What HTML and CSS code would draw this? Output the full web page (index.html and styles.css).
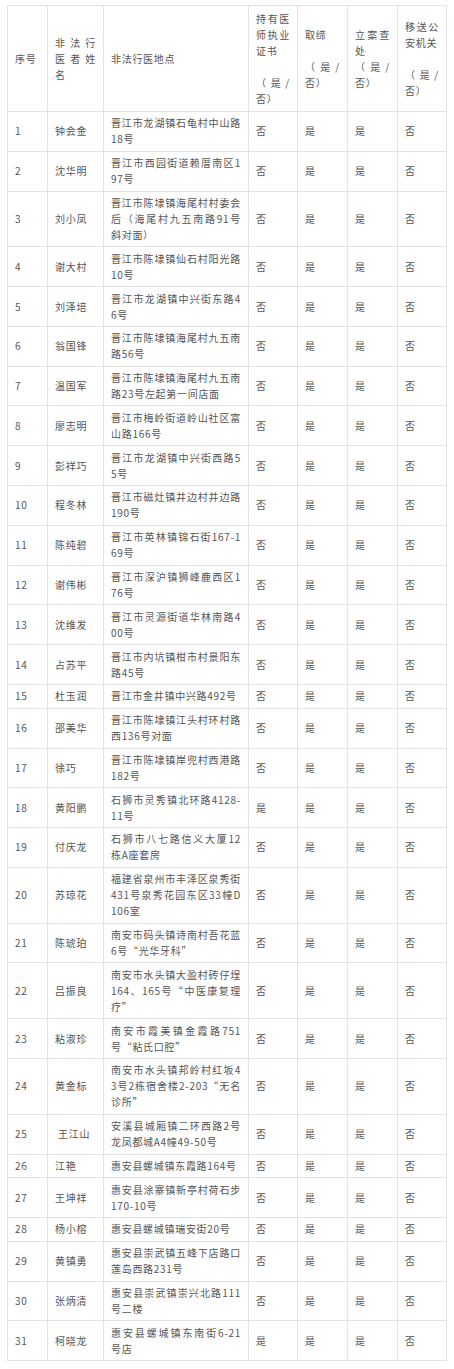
FILE: index.html
```html
<!DOCTYPE html>
<html lang="zh-CN">
<head>
<meta charset="utf-8">
<title>非法行医名单</title>
<link rel="stylesheet" href="styles.css">
</head>
<body>
<table class="list">
<colgroup>
<col class="c-no"><col class="c-name"><col class="c-addr"><col class="c-y"><col class="c-y2"><col class="c-y2"><col class="c-y">
</colgroup>
<thead>
<tr>
<th>序号</th>
<th><span class="j">非法行</span><span class="j">医者姓</span>名</th>
<th>非法行医地点</th>
<th><span class="j">持有医</span><span class="j">师执业</span>证书<span class="gap"></span><span class="j">（是/</span>否）</th>
<th>取缔<span class="gap"></span><span class="j">（是/</span>否）</th>
<th><span class="j">立案查</span>处<span class="j">（是/</span>否）</th>
<th><span class="j">移送公</span>安机关<span class="gap"></span><span class="j">（是/</span>否）</th>
</tr>
</thead>
<tbody>
<tr><td>1</td><td>钟会金</td><td><span class="j">晋江市龙湖镇石龟村中山路</span>18号</td><td>否</td><td>是</td><td>是</td><td>否</td></tr>
<tr><td>2</td><td>沈华明</td><td><span class="j">晋江市西园街道赖厝南区1</span>97号</td><td>否</td><td>是</td><td>是</td><td>否</td></tr>
<tr><td>3</td><td>刘小凤</td><td><span class="j">晋江市陈埭镇海尾村村委会</span><span class="j">后（海尾村九五南路91号</span>斜对面）</td><td>否</td><td>是</td><td>是</td><td>否</td></tr>
<tr><td>4</td><td>谢大村</td><td><span class="j">晋江市陈埭镇仙石村阳光路</span>10号</td><td>否</td><td>是</td><td>是</td><td>否</td></tr>
<tr><td>5</td><td>刘泽培</td><td><span class="j">晋江市龙湖镇中兴街东路4</span>6号</td><td>否</td><td>是</td><td>是</td><td>否</td></tr>
<tr><td>6</td><td>翁国锋</td><td><span class="j">晋江市陈埭镇海尾村九五南</span>路56号</td><td>否</td><td>是</td><td>是</td><td>否</td></tr>
<tr><td>7</td><td>温国军</td><td><span class="j">晋江市陈埭镇海尾村九五南</span>路23号左起第一间店面</td><td>否</td><td>是</td><td>是</td><td>否</td></tr>
<tr><td>8</td><td>廖志明</td><td><span class="j">晋江市梅岭街道岭山社区富</span>山路166号</td><td>否</td><td>是</td><td>是</td><td>否</td></tr>
<tr><td>9</td><td>彭祥巧</td><td><span class="j">晋江市龙湖镇中兴街西路5</span>5号</td><td>否</td><td>是</td><td>是</td><td>否</td></tr>
<tr><td>10</td><td>程冬林</td><td><span class="j">晋江市磁灶镇井边村井边路</span>190号</td><td>否</td><td>是</td><td>是</td><td>否</td></tr>
<tr><td>11</td><td>陈纯碧</td><td><span class="j">晋江市英林镇锦石街167-1</span>69号</td><td>否</td><td>是</td><td>是</td><td>否</td></tr>
<tr><td>12</td><td>谢伟彬</td><td><span class="j">晋江市深沪镇狮峰鹿西区1</span>76号</td><td>否</td><td>是</td><td>是</td><td>否</td></tr>
<tr><td>13</td><td>沈维发</td><td><span class="j">晋江市灵源街道华林南路4</span>00号</td><td>否</td><td>是</td><td>是</td><td>否</td></tr>
<tr><td>14</td><td>占苏平</td><td><span class="j">晋江市内坑镇柑市村景阳东</span>路45号</td><td>否</td><td>是</td><td>是</td><td>否</td></tr>
<tr><td>15</td><td>杜玉润</td><td>晋江市金井镇中兴路492号</td><td>否</td><td>是</td><td>是</td><td>否</td></tr>
<tr><td>16</td><td>邵美华</td><td><span class="j">晋江市陈埭镇江头村环村路</span>西136号对面</td><td>否</td><td>是</td><td>是</td><td>否</td></tr>
<tr><td>17</td><td>徐巧</td><td><span class="j">晋江市陈埭镇岸兜村西港路</span>182号</td><td>否</td><td>是</td><td>是</td><td>否</td></tr>
<tr><td>18</td><td>黄阳鹏</td><td><span class="j">石狮市灵秀镇北环路4128-</span>11号</td><td>是</td><td>是</td><td>是</td><td>否</td></tr>
<tr><td>19</td><td>付庆龙</td><td><span class="j">石狮市八七路信义大厦12</span>栋A座套房</td><td>否</td><td>是</td><td>是</td><td>否</td></tr>
<tr><td>20</td><td>苏琼花</td><td><span class="j">福建省泉州市丰泽区泉秀街</span><span class="j">431号泉秀花园东区33幢D</span>106室</td><td>否</td><td>是</td><td>是</td><td>否</td></tr>
<tr><td>21</td><td>陈琥珀</td><td><span class="j">南安市码头镇诗南村吾花蓝</span>6号“光华牙科”</td><td>否</td><td>是</td><td>是</td><td>否</td></tr>
<tr><td>22</td><td>吕振良</td><td><span class="j">南安市水头镇大盈村砖仔埕</span><span class="j">164、165号“中医康复理</span>疗”</td><td>否</td><td>是</td><td>是</td><td>否</td></tr>
<tr><td>23</td><td>粘淑珍</td><td><span class="j">南安市霞美镇金霞路751</span>号“粘氏口腔”</td><td>否</td><td>是</td><td>是</td><td>否</td></tr>
<tr><td>24</td><td>黄金标</td><td><span class="j">南安市水头镇邦岭村红坂4</span><span class="j">3号2栋宿舍楼2-203“无名</span>诊所”</td><td>否</td><td>是</td><td>是</td><td>否</td></tr>
<tr><td>25</td><td><span class="ind">王江山</span></td><td><span class="j">安溪县城厢镇二环西路2号</span>龙凤都城A4幢49-50号</td><td>否</td><td>是</td><td>是</td><td>否</td></tr>
<tr><td>26</td><td>江艳</td><td>惠安县螺城镇东霞路164号</td><td>否</td><td>是</td><td>是</td><td>否</td></tr>
<tr><td>27</td><td>王坤祥</td><td><span class="j">惠安县涂寨镇新亭村荷石步</span>170-10号</td><td>否</td><td>是</td><td>是</td><td>否</td></tr>
<tr><td>28</td><td>杨小榕</td><td>惠安县螺城镇瑞安街20号</td><td>否</td><td>是</td><td>是</td><td>否</td></tr>
<tr><td>29</td><td>黄镇勇</td><td><span class="j">惠安县崇武镇五峰下店路口</span>莲岛西路231号</td><td>否</td><td>是</td><td>是</td><td>否</td></tr>
<tr><td>30</td><td>张炳清</td><td><span class="j">惠安县崇武镇崇兴北路111</span>号二楼</td><td>否</td><td>是</td><td>是</td><td>否</td></tr>
<tr><td>31</td><td>柯晓龙</td><td><span class="j">惠安县螺城镇东南街6-21</span>号店</td><td>是</td><td>是</td><td>是</td><td>否</td></tr>
</tbody>
</table>
</body>
</html>
```
FILE: styles.css
```css
html, body {
  margin: 0;
  padding: 0;
  background: #ffffff;
}

body {
  padding: 5px 0 0 7px;
  font-family: "Noto Sans CJK SC", "Noto Sans", sans-serif;
  font-size: 10px;
  color: #555555;
}

.list {
  border-collapse: collapse;
  table-layout: fixed;
  width: 440px;
}

.c-no { width: 40px; }
.c-name { width: 56px; }
.c-addr { width: 145px; }
.c-y { width: 49px; }
.c-y2 { width: 50px; }

.list th,
.list td {
  border: 1px solid #e3e3e3;
  padding: 3.4px 7px;
  line-height: 16px;
  letter-spacing: 0.7px;
  text-align: left;
  vertical-align: middle;
  font-weight: normal;
  word-break: break-all;
}

.list th {
  padding-top: 4.5px;
  padding-bottom: 4.5px;
}

.j {
  display: block;
  text-align: justify;
  text-align-last: justify;
}

.gap {
  display: block;
  height: 16px;
}

.ind {
  padding-left: 3px;
}
```
